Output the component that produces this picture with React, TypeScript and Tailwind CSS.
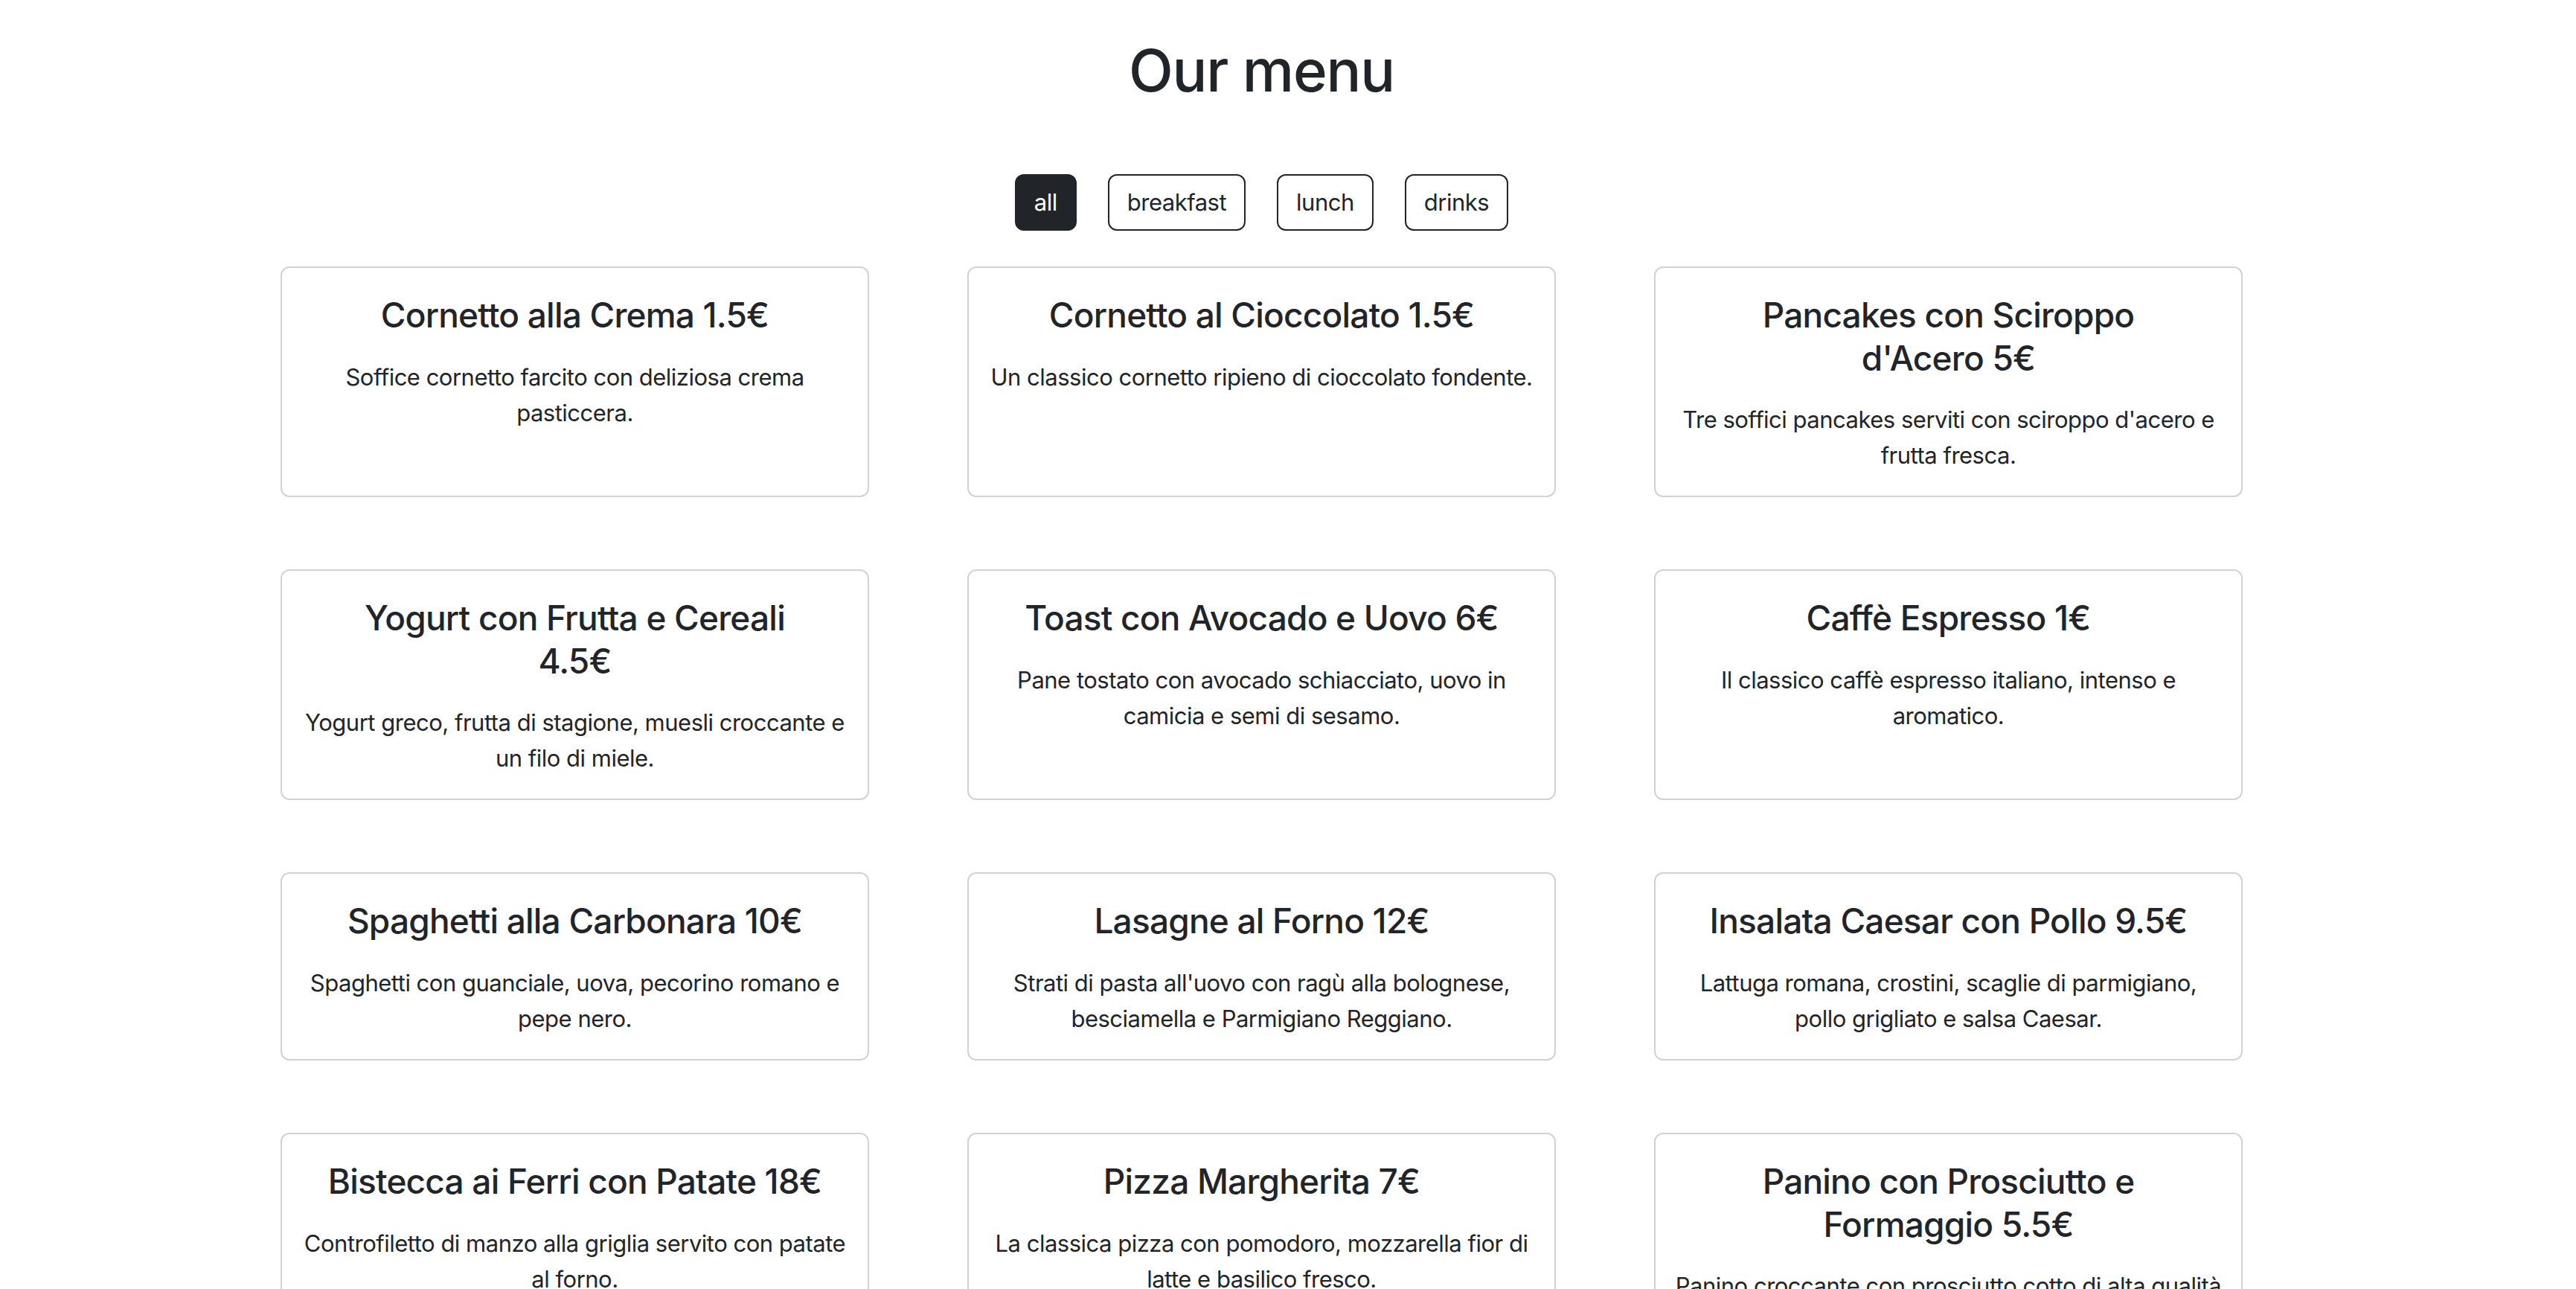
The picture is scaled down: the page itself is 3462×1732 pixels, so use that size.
import React from "react";

type Item = { name: string; price: string; desc: string };

const items: Item[] = [
  { name: "Cornetto alla Crema", price: "1.5€", desc: "Soffice cornetto farcito con deliziosa crema pasticcera." },
  { name: "Cornetto al Cioccolato", price: "1.5€", desc: "Un classico cornetto ripieno di cioccolato fondente." },
  { name: "Pancakes con Sciroppo d'Acero", price: "5€", desc: "Tre soffici pancakes serviti con sciroppo d'acero e frutta fresca." },
  { name: "Yogurt con Frutta e Cereali", price: "4.5€", desc: "Yogurt greco, frutta di stagione, muesli croccante e un filo di miele." },
  { name: "Toast con Avocado e Uovo", price: "6€", desc: "Pane tostato con avocado schiacciato, uovo in camicia e semi di sesamo." },
  { name: "Caffè Espresso", price: "1€", desc: "Il classico caffè espresso italiano, intenso e aromatico." },
  { name: "Spaghetti alla Carbonara", price: "10€", desc: "Spaghetti con guanciale, uova, pecorino romano e pepe nero." },
  { name: "Lasagne al Forno", price: "12€", desc: "Strati di pasta all'uovo con ragù alla bolognese, besciamella e Parmigiano Reggiano." },
  { name: "Insalata Caesar con Pollo", price: "9.5€", desc: "Lattuga romana, crostini, scaglie di parmigiano, pollo grigliato e salsa Caesar." },
  { name: "Bistecca ai Ferri con Patate", price: "18€", desc: "Controfiletto di manzo alla griglia servito con patate al forno." },
  { name: "Pizza Margherita", price: "7€", desc: "La classica pizza con pomodoro, mozzarella fior di latte e basilico fresco." },
  { name: "Panino con Prosciutto e Formaggio", price: "5.5€", desc: "Panino croccante con prosciutto cotto di alta qualità e formaggio filante." },
];

const filters = ["all", "breakfast", "lunch", "drinks"];

export default function App() {
  return (
    <div className="w-[3391px] bg-white font-['Inter','Noto_Sans','Liberation_Sans',sans-serif] text-[#212529]">
      <h1 className="pt-[47px] text-center text-[78px] leading-[96px] font-medium tracking-[-1.2px]">Our menu</h1>
      <div className="mt-[91px] flex justify-center gap-[42px]">
        {filters.map((f, i) => (
          <button
            key={f}
            className={
              i === 0
                ? "h-[76px] rounded-[12px] border-2 border-[#212529] bg-[#212529] px-[24px] text-[31px] leading-[48px] tracking-[-0.5px] text-white"
                : "h-[76px] rounded-[12px] border-2 border-[#212529] bg-white px-[24px] text-[31px] leading-[48px] tracking-[-0.5px] text-[#212529]"
            }
          >
            {f}
          </button>
        ))}
      </div>
      <div className="mx-auto mt-[48px] grid w-[2637px] grid-cols-3 gap-x-[132px] gap-y-[97px]">
        {items.map((it) => (
          <div
            key={it.name}
            className="rounded-[12px] border-2 border-[#d2d2d2] bg-white px-[24px] pt-[35px] pb-[30px] text-center"
          >
            <h4 className="mx-[35px] mb-[30px] text-[46px] leading-[57.6px] font-medium tracking-[-0.8px]">
              {it.name} {it.price}
            </h4>
            <p className="text-[31px] leading-[48px] tracking-[-0.5px]">{it.desc}</p>
          </div>
        ))}
      </div>
    </div>
  );
}
